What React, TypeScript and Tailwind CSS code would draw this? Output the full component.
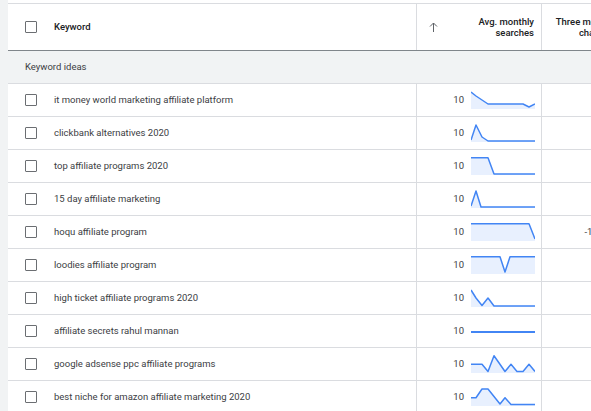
import React from "react";

type Row = {
  keyword: string;
  searches: string;
  change?: string;
  points: [number, number][];
  flat?: boolean;
};

const ROWS: Row[] = [
  {
    keyword: "it money world marketing affiliate platform",
    searches: "10",
    points: [[0, 1], [5, 5], [17, 13], [52, 13], [58, 16], [64, 13]],
  },
  {
    keyword: "clickbank alternatives 2020",
    searches: "10",
    points: [[0, 16], [5, 1], [11, 13], [17, 17], [64, 17]],
  },
  {
    keyword: "top affiliate programs 2020",
    searches: "10",
    points: [[0, 0.8], [17, 0.8], [23, 17], [64, 17]],
  },
  {
    keyword: "15 day affiliate marketing",
    searches: "10",
    points: [[0, 16], [5, 1], [10, 17], [64, 17]],
  },
  {
    keyword: "hoqu affiliate program",
    searches: "10",
    change: "-100%",
    points: [[0, 0.8], [58, 0.8], [64, 16]],
  },
  {
    keyword: "loodies affiliate program",
    searches: "10",
    points: [[0, 0.8], [29, 0.8], [34, 16], [39, 0.8], [64, 0.8]],
  },
  {
    keyword: "high ticket affiliate programs 2020",
    searches: "10",
    points: [[0, 1], [5, 9], [11, 16.5], [17, 9], [23, 17], [64, 17]],
  },
  {
    keyword: "affiliate secrets rahul mannan",
    searches: "10",
    flat: true,
    points: [[0, 10], [64, 10]],
  },
  {
    keyword: "google adsense ppc affiliate programs",
    searches: "10",
    points: [
      [0, 9.3], [11, 9.3], [17, 16.5], [23, 0.8], [34, 16.5], [40, 9.3],
      [46, 16.5], [52, 16.5], [58, 9.3], [64, 16.5],
    ],
  },
  {
    keyword: "best niche for amazon affiliate marketing 2020",
    searches: "10",
    points: [[0, 9.7], [5, 9.7], [11, 1], [17, 1], [29, 16], [34, 9.7], [40, 16.5], [64, 16.5]],
  },
];

function Checkbox() {
  return (
    <span className="block h-3 w-3 shrink-0 rounded-[1px] border-[1.5px] border-[#6b6e72]" />
  );
}

function Sparkline({ points, flat }: { points: [number, number][]; flat?: boolean }) {
  const line = points.map(([x, y]) => `${x},${y}`).join(" ");
  const area = `0,18 ${line} 64,18`;
  return (
    <svg width="64" height="18" viewBox="0 0 64 18" className="ml-[7px] shrink-0">
      {!flat && <polygon points={area} fill="#e8f0fe" />}
      <polyline
        points={line}
        fill="none"
        stroke="#4285f4"
        strokeWidth={flat ? 2 : 1.5}
        strokeLinejoin="round"
      />
    </svg>
  );
}

export default function App() {
  return (
    <div className="flex h-[411px] w-[591px] overflow-hidden bg-white font-['Roboto',sans-serif] text-[9.5px] text-[#3c4043]">
      <div className="w-2 shrink-0 bg-[#f1f3f4]" />
      <div className="min-w-0 flex-1 overflow-hidden pt-[3px]">
        <div className="w-[620px] border-t border-[#dadce0]">
          {/* header */}
          <div className="flex h-[47px] border-b border-[#80868b] font-medium text-[#202124]">
            <div className="flex w-[409px] items-center border-r border-[#dadce0] pl-[17px]">
              <Checkbox />
              <span className="ml-[17px]">Keyword</span>
            </div>
            <div className="flex w-[125px] items-center justify-between border-r border-[#dadce0] pl-3 pr-[7px]">
              <svg width="9" height="10" viewBox="0 0 9 10" className="text-[#5f6368]">
                <path d="M4.5 10V1M1 4.5L4.5 1L8 4.5" fill="none" stroke="currentColor" strokeWidth="1" />
              </svg>
              <span className="text-right leading-[11px]">
                Avg. monthly
                <br />
                searches
              </span>
            </div>
            <div className="flex w-[75px] items-center justify-end pr-[7px]">
              <span className="whitespace-nowrap text-right leading-[11px]">
                Three month
                <br />
                change
              </span>
            </div>
          </div>

          {/* group */}
          <div className="flex h-[33px] items-center border-b border-[#dadce0] bg-[#f1f3f4] pl-[17px]">
            Keyword ideas
          </div>

          {ROWS.map((r) => (
            <div key={r.keyword} className="flex h-[33px] border-b border-[#dadce0]">
              <div className="flex w-[409px] items-center border-r border-[#dadce0] pl-[17px]">
                <Checkbox />
                <span className="ml-[17px]">{r.keyword}</span>
              </div>
              <div className="flex w-[125px] items-center justify-end border-r border-[#dadce0] pr-[6px]">
                <span>{r.searches}</span>
                <Sparkline points={r.points} flat={r.flat} />
              </div>
              <div className="flex w-[75px] items-center justify-end pr-[7px]">
                {r.change}
              </div>
            </div>
          ))}
        </div>
      </div>
    </div>
  );
}
